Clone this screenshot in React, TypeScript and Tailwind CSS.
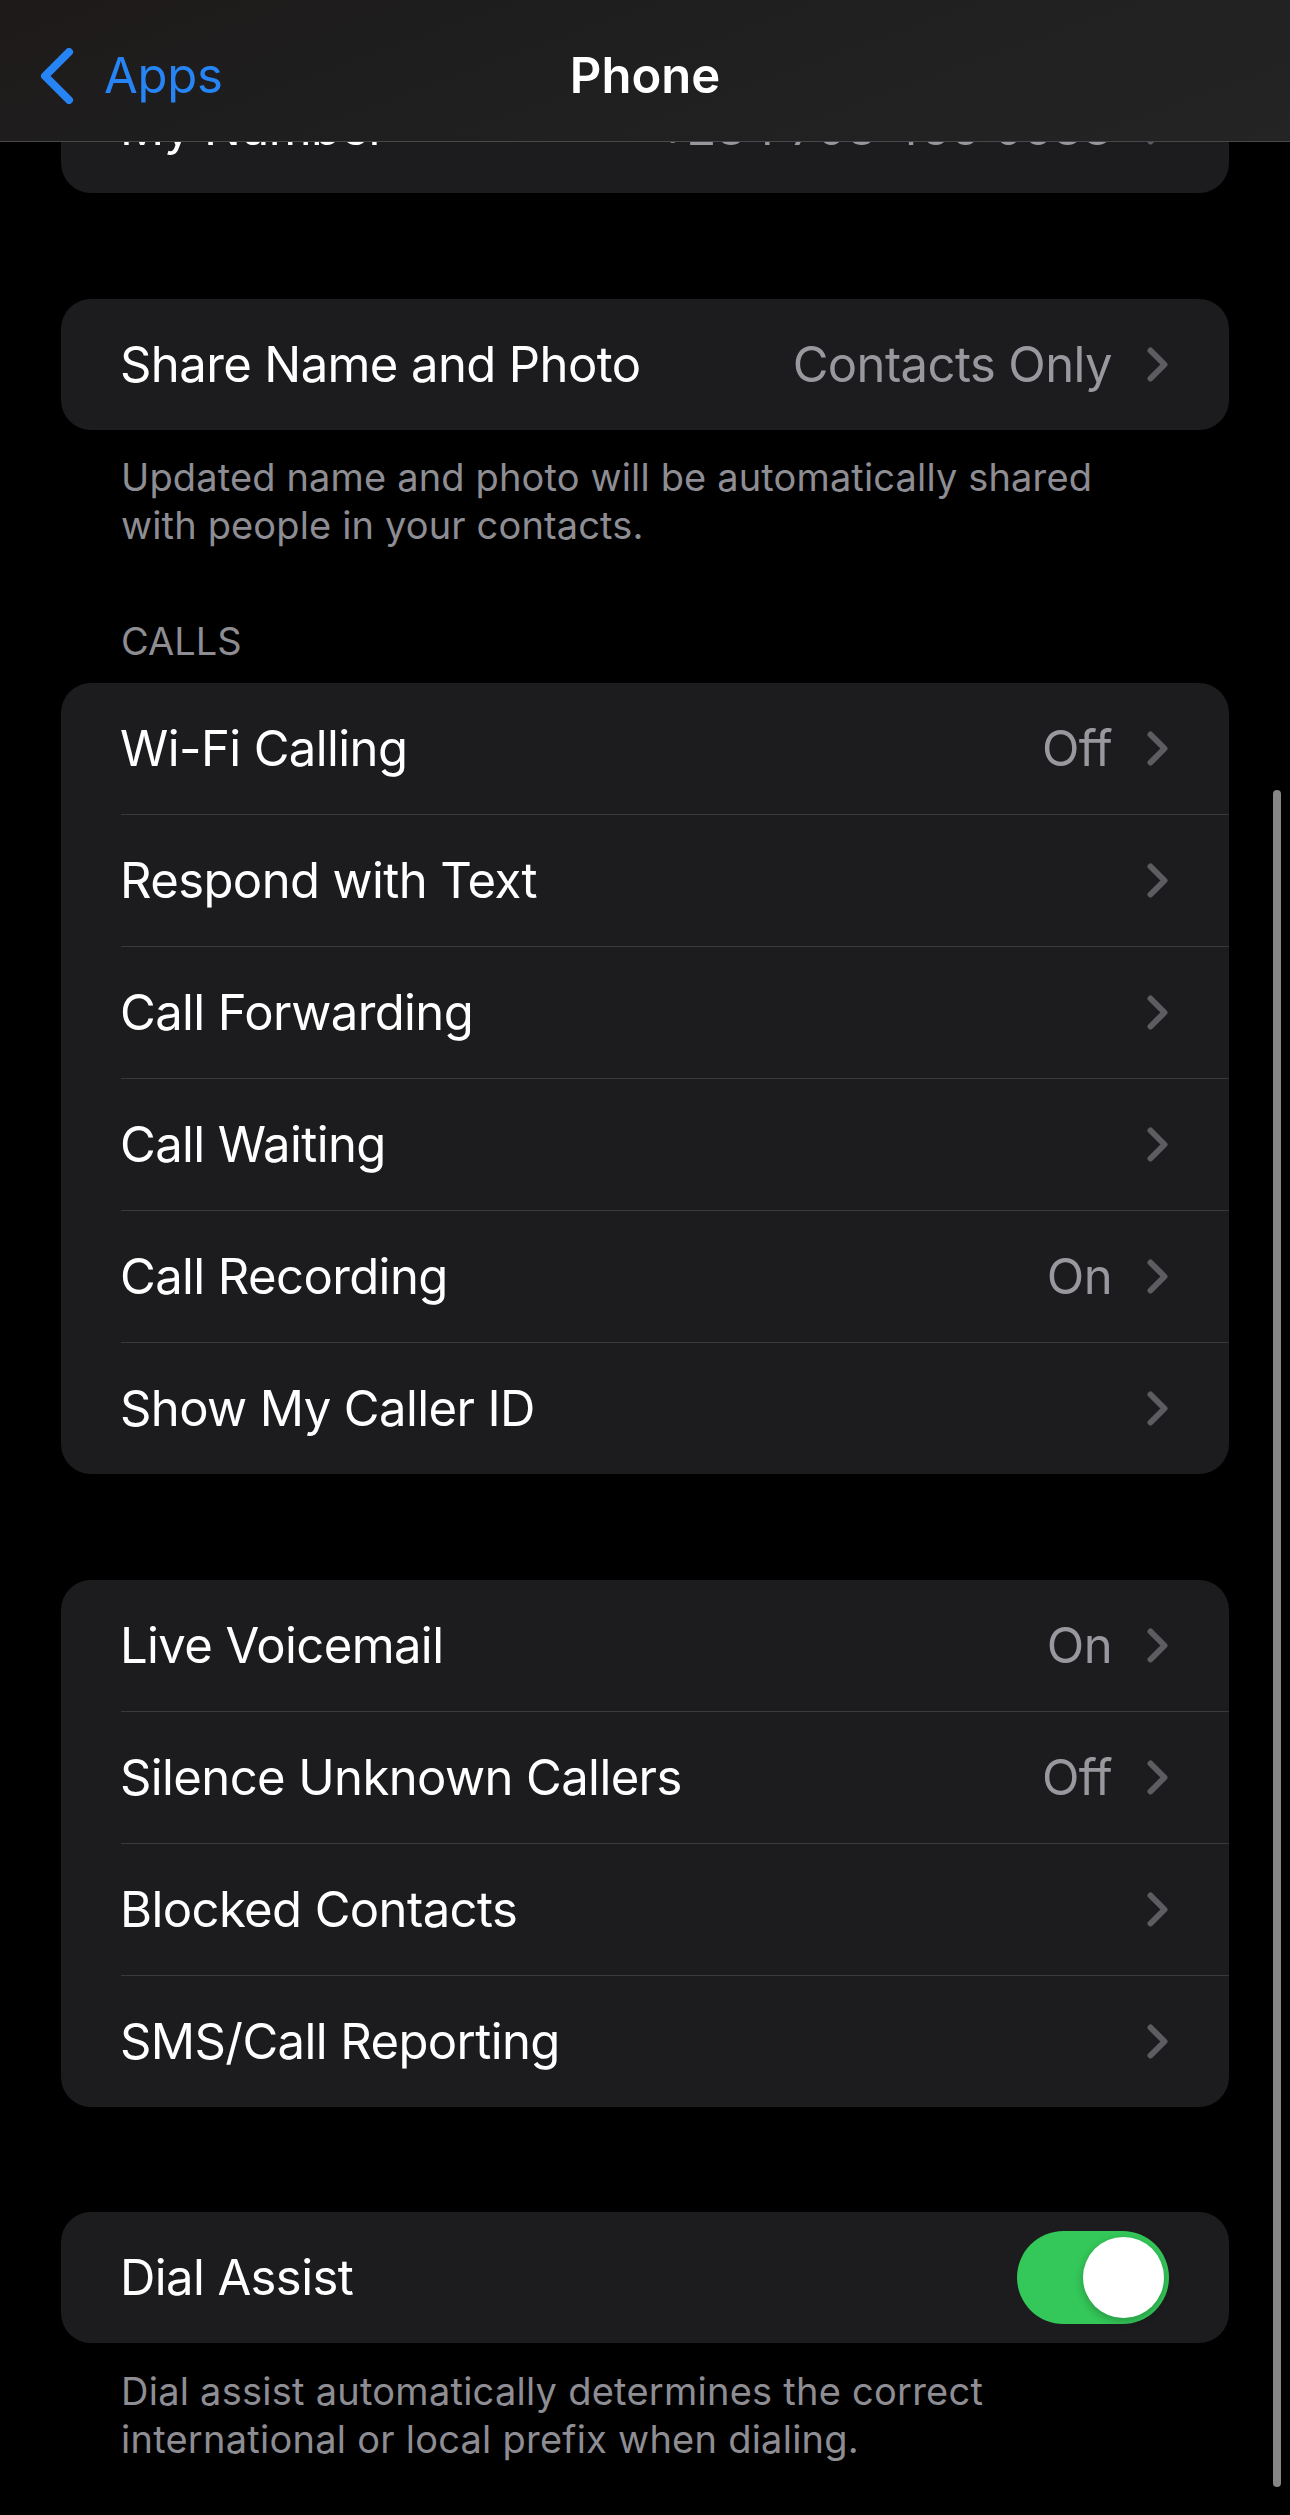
import React from "react";

function Chevron() {
  return (
    <svg width="21" height="35" viewBox="0 0 21 35" className="shrink-0">
      <path d="M3.5 3.5 L17.5 17.5 L3.5 31.5" fill="none" stroke="#5c5c61" strokeWidth="6" strokeLinecap="round" strokeLinejoin="round" />
    </svg>
  );
}

function Row({ title, value }: { title: string; value?: string }) {
  return (
    <div className="flex h-[131px] items-center pl-[59px] pr-[61px]">
      <span className="flex-1 text-[49px] leading-none tracking-[-0.6px] text-white">{title}</span>
      {value && <span className="mr-[35px] text-[49px] leading-none tracking-[-0.6px] text-[#98989e]">{value}</span>}
      <Chevron />
    </div>
  );
}

function Sep() {
  return <div className="ml-[60px] h-px bg-[#3a3a3c]" />;
}

function Card({ children, className = "" }: { children: React.ReactNode; className?: string }) {
  return <div className={"overflow-hidden rounded-[30px] bg-[#1c1c1e] " + className}>{children}</div>;
}

function RowList({ rows }: { rows: { title: string; value?: string }[] }) {
  return (
    <>
      {rows.map((r, i) => (
        <React.Fragment key={r.title}>
          {i > 0 && <Sep />}
          <Row title={r.title} value={r.value} />
        </React.Fragment>
      ))}
    </>
  );
}

export default function App() {
  const calls = [
    { title: "Wi-Fi Calling", value: "Off" },
    { title: "Respond with Text" },
    { title: "Call Forwarding" },
    { title: "Call Waiting" },
    { title: "Call Recording", value: "On" },
    { title: "Show My Caller ID" },
  ];
  const more = [
    { title: "Live Voicemail", value: "On" },
    { title: "Silence Unknown Callers", value: "Off" },
    { title: "Blocked Contacts" },
    { title: "SMS/Call Reporting" },
  ];
  return (
    <div className="relative h-[2515px] w-[1290px] overflow-hidden bg-black font-['Inter','Liberation_Sans',sans-serif]">
      <div className="flex flex-col px-[61px] pt-[62px]">
        <Card>
          <Row title="My Number" value="+234 703 466 0588" />
        </Card>

        <Card className="mt-[106px]">
          <Row title="Share Name and Photo" value="Contacts Only" />
        </Card>
        <p className="mt-[23px] px-[60px] text-[38px] leading-[48px] tracking-[0.15px] text-[#8d8d93]">
          Updated name and photo will be automatically shared
          <br />
          with people in your contacts.
        </p>

        <p className="mt-[68px] px-[60px] text-[38px] leading-[48px] text-[#8d8d93]">CALLS</p>
        <Card className="mt-[18px]">
          <RowList rows={calls} />
        </Card>

        <Card className="mt-[106px]">
          <RowList rows={more} />
        </Card>

        <Card className="mt-[105px]">
          <div className="flex h-[131px] items-center pl-[59px] pr-[60px]">
            <span className="flex-1 text-[49px] leading-none tracking-[-0.6px] text-white">Dial Assist</span>
            <div className="relative h-[93px] w-[152px] rounded-full bg-[#34c759]">
              <div className="absolute right-[5px] top-[6px] h-[81px] w-[81px] rounded-full bg-white shadow-[0_3px_8px_rgba(0,0,0,0.25)]" />
            </div>
          </div>
        </Card>
        <p className="mt-[24px] px-[60px] text-[38px] leading-[48px] tracking-[0.25px] text-[#8d8d93]">
          Dial assist automatically determines the correct
          <br />
          international or local prefix when dialing.
        </p>
      </div>

      {/* Navigation bar overlay */}
      <div className="absolute inset-x-0 top-0 h-[142px] border-b border-[#48484a] bg-[linear-gradient(160deg,#1f1a1a_0%,#1e1e1e_35%,#242424_100%)]">
        <div className="grid h-full grid-cols-[1fr_auto_1fr] items-center pt-[10px]">
          <div className="flex items-center pl-[40px]">
            <svg width="34" height="56" viewBox="0 0 34 56">
              <path d="M29 4 L5 28 L29 52" fill="none" stroke="#2684f5" strokeWidth="8" strokeLinecap="round" strokeLinejoin="round" />
            </svg>
            <span className="ml-[30px] text-[49px] leading-none tracking-[-0.3px] text-[#2684f5]">Apps</span>
          </div>
          <span className="text-[49px] font-semibold leading-none text-white">Phone</span>
          <div />
        </div>
      </div>

      {/* Scroll indicator */}
      <div className="absolute left-[1273px] top-[790px] h-[1697px] w-[8px] rounded-full bg-[#858585]" />
    </div>
  );
}
